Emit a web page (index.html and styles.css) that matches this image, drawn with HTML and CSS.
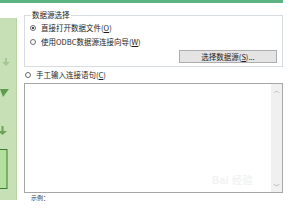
FILE: index.html
```html
<!DOCTYPE html>
<html>
<head>
<meta charset="utf-8">
<link rel="stylesheet" href="styles.css">
</head>
<body>
<div class="page">
  <div class="topbar"></div>
  <div class="main">
    <svg class="side" width="17" height="182" viewBox="0 0 17 182">
      <rect x="0" y="0" width="17" height="182" fill="#c8e0b6"/>
      <rect x="16" y="0" width="1" height="182" fill="#b7d2a3"/>
      <rect x="5" y="40" width="2" height="4" fill="#a6c794"/>
      <polygon points="2,44 10,44 6,48" fill="#a6c794"/>
      <polygon points="0,71 9,71 3,79" fill="#5f9c4f"/>
      <rect x="1.5" y="108" width="2" height="5" fill="#69a456"/>
      <polygon points="-2,113 7,113 2.5,117" fill="#69a456"/>
      <rect x="-1" y="131.5" width="8" height="39" fill="#b3e09d" stroke="#3b7c33" stroke-width="1"/>
    </svg>
    <div class="content">
      <fieldset class="group">
        <legend class="legend">数据源选择</legend>
        <div class="group-body">
          <div class="opt"><span class="radio checked"></span><span>直接打开数据文件(<u>O</u>)</span></div>
          <div class="opt"><span class="radio"></span><span>使用ODBC数据源连接向导(<u>W</u>)</span></div>
          <div class="btn">选择数据源(<u>S</u>)...</div>
        </div>
      </fieldset>
      <div class="opt manual"><span class="radio"></span><span>手工输入连接语句(<u>C</u>)</span></div>
      <div class="textarea">
        <div class="ta-body"></div>
        <div class="scroll">
          <span class="chev">︿</span>
          <span class="chev">﹀</span>
        </div>
      </div>
      <div class="example">示例：</div>
    </div>
  </div>
  <div class="watermark">Bai<span class="wm-cn">经验</span></div>
</div>
</body>
</html>
```
FILE: styles.css
```css
html, body {
  margin: 0;
  padding: 0;
  background: #ffffff;
}
body {
  width: 293px;
  height: 209px;
  overflow: hidden;
  font-family: "Noto Sans CJK SC", "Noto Sans", sans-serif;
  font-size: 7.5px;
  color: #1c1c1c;
}
.page {
  position: relative;
  width: 293px;
  height: 209px;
}
.topbar {
  width: 283px;
  height: 3px;
  background: #5db482;
}
.main {
  display: flex;
  align-items: flex-start;
}
.side {
  display: block;
  margin-top: 15px;
  flex: none;
}
.content {
  margin-left: 7px;
  width: 259px;
  display: flex;
  flex-direction: column;
}
.group {
  margin: 7px 0 0 0;
  padding: 0 5px 3px 5px;
  border: 1px solid #d6dce0;
  min-width: 0;
}
.legend {
  margin-left: 1px;
  padding: 0 1px;
  line-height: 10px;
  height: 10px;
}
.group-body {
  display: flex;
  flex-direction: column;
  padding-top: 3px;
}
.opt {
  display: flex;
  align-items: center;
  height: 10px;
  line-height: 10px;
  gap: 5px;
  white-space: nowrap;
}
.opt + .opt {
  margin-top: 4px;
}
.opt u, .btn u {
  text-decoration: underline;
}
.radio {
  flex: none;
  width: 6px;
  height: 6px;
  border: 1px solid #6b6b6b;
  border-radius: 50%;
  background: #fff;
  position: relative;
  box-sizing: border-box;
}
.radio.checked::after {
  content: "";
  position: absolute;
  left: 1px;
  top: 1px;
  width: 2px;
  height: 2px;
  border-radius: 50%;
  background: #111;
}
.btn {
  align-self: flex-end;
  margin-top: 3px;
  width: 98px;
  height: 13px;
  box-sizing: border-box;
  border: 1px solid #adadad;
  background: #e4e4e4;
  text-align: center;
  line-height: 11px;
  margin-right: 0;
}
.manual {
  margin-top: 3px;
  padding-left: 1px;
}
.textarea {
  margin-top: 3px;
  height: 110px;
  box-sizing: border-box;
  border: 1px solid #a6a6a6;
  display: flex;
}
.ta-body {
  flex: 1;
  background: #fff;
}
.scroll {
  width: 11px;
  background: #f0f0f0;
  display: flex;
  flex-direction: column;
  justify-content: space-between;
  align-items: center;
  padding: 2px 0;
}
.chev {
  font-size: 6px;
  line-height: 7px;
  color: #a0a0a0;
}
.example {
  margin-top: 1px;
  padding-left: 7px;
  font-size: 6px;
  line-height: 8px;
  color: #333;
}
.watermark {
  position: absolute;
  left: 212px;
  top: 172px;
  font-family: "Liberation Sans", sans-serif;
  font-size: 10px;
  font-weight: bold;
  color: #f2f2f2;
  letter-spacing: 0.5px;
}
.wm-cn {
  font-family: "Noto Sans CJK SC", sans-serif;
  margin-left: 3px;
}
```
